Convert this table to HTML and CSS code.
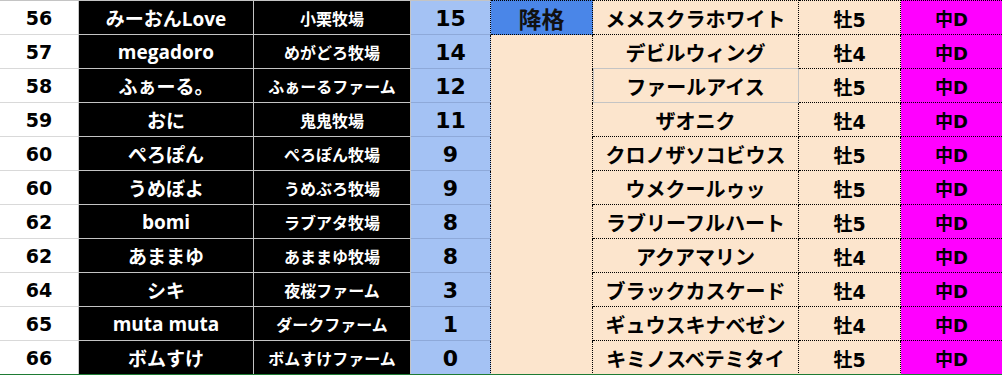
FILE: index.html
```html
<!DOCTYPE html>
<html lang="ja">
<head>
<meta charset="utf-8">
<title>Ranking</title>
<link rel="stylesheet" href="styles.css">
</head>
<body>
<div class="sheet">
  <div class="row first">
    <div class="c rank">56</div><div class="c name">みーおんLove</div><div class="c farm">小栗牧場</div><div class="c pts">15</div><div class="c note demote">降格</div><div class="c horse">メメスクラホワイト</div><div class="c sex">牡5</div><div class="c dist">中D</div>
  </div>
  <div class="row">
    <div class="c rank">57</div><div class="c name">megadoro</div><div class="c farm">めがどろ牧場</div><div class="c pts">14</div><div class="c note"></div><div class="c horse plain">デビルウィング</div><div class="c sex">牡4</div><div class="c dist">中D</div>
  </div>
  <div class="row">
    <div class="c rank">58</div><div class="c name">ふぁーる。</div><div class="c farm">ふぁーるファーム</div><div class="c pts">12</div><div class="c note"></div><div class="c horse grid">ファールアイス</div><div class="c sex">牡5</div><div class="c dist">中D</div>
  </div>
  <div class="row">
    <div class="c rank">59</div><div class="c name">おに</div><div class="c farm">鬼鬼牧場</div><div class="c pts">11</div><div class="c note"></div><div class="c horse">ザオニク</div><div class="c sex">牡4</div><div class="c dist">中D</div>
  </div>
  <div class="row">
    <div class="c rank">60</div><div class="c name">ぺろぽん</div><div class="c farm">ぺろぽん牧場</div><div class="c pts">9</div><div class="c note"></div><div class="c horse">クロノザソコビウス</div><div class="c sex">牡5</div><div class="c dist">中D</div>
  </div>
  <div class="row">
    <div class="c rank">60</div><div class="c name">うめぼよ</div><div class="c farm">うめぶろ牧場</div><div class="c pts">9</div><div class="c note"></div><div class="c horse">ウメクールゥッ</div><div class="c sex">牡5</div><div class="c dist">中D</div>
  </div>
  <div class="row">
    <div class="c rank">62</div><div class="c name">bomi</div><div class="c farm">ラブアタ牧場</div><div class="c pts">8</div><div class="c note"></div><div class="c horse">ラブリーフルハート</div><div class="c sex">牡5</div><div class="c dist">中D</div>
  </div>
  <div class="row">
    <div class="c rank">62</div><div class="c name">あままゆ</div><div class="c farm">あままゆ牧場</div><div class="c pts">8</div><div class="c note"></div><div class="c horse">アクアマリン</div><div class="c sex">牡4</div><div class="c dist">中D</div>
  </div>
  <div class="row">
    <div class="c rank">64</div><div class="c name">シキ</div><div class="c farm">夜桜ファーム</div><div class="c pts">3</div><div class="c note"></div><div class="c horse">ブラックカスケード</div><div class="c sex">牡4</div><div class="c dist">中D</div>
  </div>
  <div class="row">
    <div class="c rank">65</div><div class="c name">muta muta</div><div class="c farm">ダークファーム</div><div class="c pts">1</div><div class="c note"></div><div class="c horse">ギュウスキナベゼン</div><div class="c sex">牡4</div><div class="c dist">中D</div>
  </div>
  <div class="row">
    <div class="c rank">66</div><div class="c name">ボムすけ</div><div class="c farm">ボムすけファーム</div><div class="c pts">0</div><div class="c note"></div><div class="c horse">キミノスベテミタイ</div><div class="c sex">牡5</div><div class="c dist">中D</div>
  </div>
</div>
</body>
</html>
```
FILE: styles.css
```css
* { box-sizing: border-box; }
html, body { margin: 0; padding: 0; background: #ffffff; }
body { width: 1002px; height: 375px; overflow: hidden; }

.sheet {
  display: flex;
  flex-direction: column;
  width: 1002px;
  height: 375px;
  overflow: hidden;
  border-bottom: 1px solid #1e7b34;
  font-family: "Noto Sans CJK JP", sans-serif;
  font-weight: 700;
}

.row {
  display: grid;
  grid-template-columns: 79px 175px 157px 80px 102px 206px 102px 101px;
  height: 34px;
  flex: 0 0 34px;
}
.row.first { height: 35px; flex-basis: 35px; }

.c {
  display: flex;
  align-items: center;
  justify-content: center;
  white-space: nowrap;
  overflow: hidden;
  padding-top: 1px;
  border-right: 1px solid #c4c4c4;
  border-bottom: 1px solid #c4c4c4;
}

.first .c { border-top: 1px solid #c4c4c4; }

.rank {
  background: #ffffff;
  color: #000;
  border-right-color: #c8c8c8;
  border-bottom-color: #d9d9d9;
  font-family: "DejaVu Sans", sans-serif;
  font-size: 19px;
}

.name {
  background: #000;
  color: #fff;
  font-family: "Open Sans", "Noto Sans CJK JP", sans-serif;
  font-size: 19px;
}

.farm {
  background: #000;
  color: #fff;
  font-size: 16px;
}

.pts {
  background: #a4c2f4;
  color: #000;
  font-family: "DejaVu Sans", sans-serif;
  font-size: 22px;
  border-bottom-color: #8ea9d9;
  border-right: 1px dotted #000;
}

.note {
  background: #fce5cd;
  border-right: 1px dotted #000;
  border-bottom: none;
}
.first .note { border-bottom: 1px dotted #000; }

.note.demote {
  background: #4a86e8;
  color: #111;
  font-size: 23px;
}

.horse {
  background: #fce5cd;
  color: #000;
  font-size: 20px;
  border-right: 1px dotted #000;
  border-bottom: 1px dotted #000;
}
.horse.plain { border-bottom-color: #c4c4c4; border-bottom-style: solid; }
.horse.grid {
  border-right: 1px solid #c4c4c4;
  border-bottom: 1px solid #c4c4c4;
  box-shadow: inset 1px 0 0 #c4c4c4;
}

.sex {
  background: #fce5cd;
  color: #000;
  font-family: "DejaVu Sans", "Noto Sans CJK JP", sans-serif;
  font-size: 19px;
  border-right: 1px dotted #000;
  border-bottom: 1px dotted #000;
}

.dist {
  background: #ff00ff;
  color: #000;
  font-family: "DejaVu Sans", "Noto Sans CJK JP", sans-serif;
  font-size: 18px;
  border-right: none;
  border-bottom: 1px dotted #000;
}

.first .note, .first .horse, .first .sex, .first .dist { border-top: 1px dotted #000; }
```
